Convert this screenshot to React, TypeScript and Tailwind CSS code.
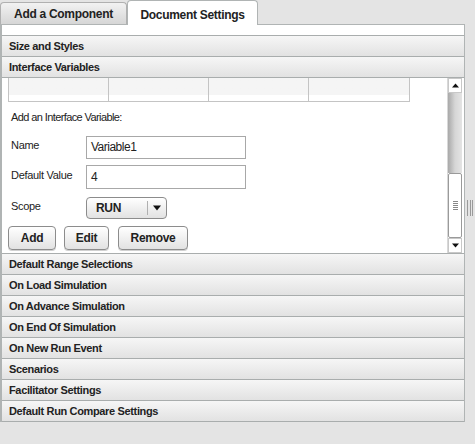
import React from 'react';

const font = "font-['Liberation_Sans',Arial,sans-serif]";

// accordion section header
const SectionHeader = ({ title }: { title: string }) => (
    <div className="h-[21px] border-b border-[#a9adad] bg-gradient-to-b from-[#f6f6f6] to-[#e2e2e2] pl-[7px] flex items-center text-[11px] font-bold text-[#222] tracking-[-0.35px]">
        {title}
    </div>
);

const Button = ({ label, width }: { label: string; width: string }) => (
    <button
        className={`${width} h-[24px] rounded-[4px] border border-[#8c8c8c] bg-gradient-to-b from-white to-[#e2e2e2] text-[12px] font-bold text-[#222] tracking-[-0.3px] shadow-[0_1px_0_#d0d0d0]`}
    >
        {label}
    </button>
);

const Scrollbar = () => (
    <div className="w-[15px] h-full flex flex-col border-l border-[#d8d8d8]">
        <div className="h-[15px] bg-white border border-[#c8c8c8] flex items-center justify-center">
            <svg width="7" height="5" viewBox="0 0 7 5">
                <path d="M3.5 0.5 L7 4.5 H0 Z" fill="#111" />
            </svg>
        </div>
        <div className="h-[80px] bg-gradient-to-r from-[#a9a9a9] via-[#d6d6d6] to-[#e4e4e4]" />
        <div className="flex-1 bg-white border border-[#9a9a9a] rounded-[2px] flex flex-col items-center justify-center gap-[1px]">
            <div className="w-[5px] h-px bg-[#888]" />
            <div className="w-[5px] h-px bg-[#888]" />
            <div className="w-[5px] h-px bg-[#888]" />
            <div className="w-[5px] h-px bg-[#888]" />
            <div className="w-[5px] h-px bg-[#888]" />
        </div>
        <div className="h-[15px] bg-white border border-[#c8c8c8] flex items-center justify-center">
            <svg width="7" height="5" viewBox="0 0 7 5">
                <path d="M0 0.5 H7 L3.5 4.5 Z" fill="#111" />
            </svg>
        </div>
    </div>
);

const InterfaceVariables = () => (
    <div className="h-[176px] border-b border-[#a9adad] flex bg-white">
        <div className="flex-1 pl-[6px] text-[11px] text-[#222] tracking-[-0.3px]">
            <div className="w-[402px] h-[24px] grid grid-cols-4 border-l border-r border-b border-[#c4c4c4]">
                <div className="border-r border-[#c4c4c4] bg-gradient-to-b from-[#f5f5f5] from-[75%] to-white to-[75%]" />
                <div className="border-r border-[#c4c4c4] bg-gradient-to-b from-[#f5f5f5] from-[75%] to-white to-[75%]" />
                <div className="border-r border-[#c4c4c4] bg-gradient-to-b from-[#f5f5f5] from-[75%] to-white to-[75%]" />
                <div className="bg-gradient-to-b from-[#f5f5f5] from-[75%] to-white to-[75%]" />
            </div>
            <div className="mt-[7px] ml-[3px] tracking-[-0.6px]">Add an Interface Variable:</div>
            <div className="mt-[10px] flex items-center">
                <div className="w-[75px] ml-[3px] -mt-[3px]">Name</div>
                <div className="w-[160px] h-[23px] border border-[#a8a8a8] flex items-center pl-[4px] text-[12px] tracking-[-0.5px]">
                    Variable1
                </div>
            </div>
            <div className="mt-[6px] flex items-center">
                <div className="w-[75px] ml-[3px] -mt-[3px]">Default Value</div>
                <div className="w-[160px] h-[24px] border border-[#a8a8a8] flex items-center pl-[4px] text-[12px]">
                    4
                </div>
            </div>
            <div className="mt-[8px] flex items-center">
                <div className="w-[75px] ml-[3px] -mt-[3px]">Scope</div>
                <div className="w-[81px] h-[22px] rounded-[4px] border border-[#8c8c8c] bg-gradient-to-b from-white to-[#e2e2e2] flex items-center">
                    <div className="w-[60px] pl-[9px] text-[12px] font-bold tracking-[-0.3px]">RUN</div>
                    <div className="h-[14px] border-l border-[#b0b0b0]" />
                    <div className="flex-1 flex justify-center">
                        <svg width="8" height="6" viewBox="0 0 8 6">
                            <path d="M0 0.5 H8 L4 5.5 Z" fill="#111" />
                        </svg>
                    </div>
                </div>
            </div>
            <div className="mt-[7px] flex">
                <Button label="Add" width="w-[48px]" />
                <Button label="Edit" width="w-[45px] ml-[8px]" />
                <Button label="Remove" width="w-[70px] ml-[9px]" />
            </div>
        </div>
        <Scrollbar />
        <div className="w-[2px]" />
    </div>
);

const sections = [
    'Default Range Selections',
    'On Load Simulation',
    'On Advance Simulation',
    'On End Of Simulation',
    'On New Run Event',
    'Scenarios',
    'Facilitator Settings',
    'Default Run Compare Settings',
];

export default function App() {
    return (
        <div className={`w-[475px] h-[444px] bg-[#e4e4e4] ${font} overflow-hidden`}>
            <div className="h-[24px] flex items-end">
                <div className="w-[127px] h-[22px] rounded-t-[4px] border border-b-0 border-[#b0b0b0] bg-gradient-to-b from-[#f2f2f2] to-[#d6d6d6] flex items-center justify-center text-[12px] font-bold text-[#222] tracking-[-0.3px]">
                    Add a Component
                </div>
                <div className="w-[131px] h-[25px] -mb-px relative z-10 rounded-t-[4px] border border-b-0 border-[#b0b4b4] bg-white flex items-center justify-center pt-[3px] text-[12px] font-bold text-[#222] tracking-[-0.3px]">
                    Document Settings
                </div>
            </div>
            <div className="flex">
                <div className="w-[465px] border-t border-l-2 border-r border-[#b0b4b4] bg-white">
                    <div className="h-[11px] border-b border-[#a9adad]" />
                    <SectionHeader title="Size and Styles" />
                    <SectionHeader title="Interface Variables" />
                    <InterfaceVariables />
                    {sections.map((title) => (
                        <SectionHeader key={title} title={title} />
                    ))}
                </div>
                <div className="flex-1 pt-[176px] flex justify-center gap-[1.5px]">
                    <div className="w-px h-[16px] bg-[#9a9a9a]" />
                    <div className="w-px h-[16px] bg-[#9a9a9a]" />
                    <div className="w-px h-[16px] bg-[#9a9a9a]" />
                </div>
            </div>
        </div>
    );
}
